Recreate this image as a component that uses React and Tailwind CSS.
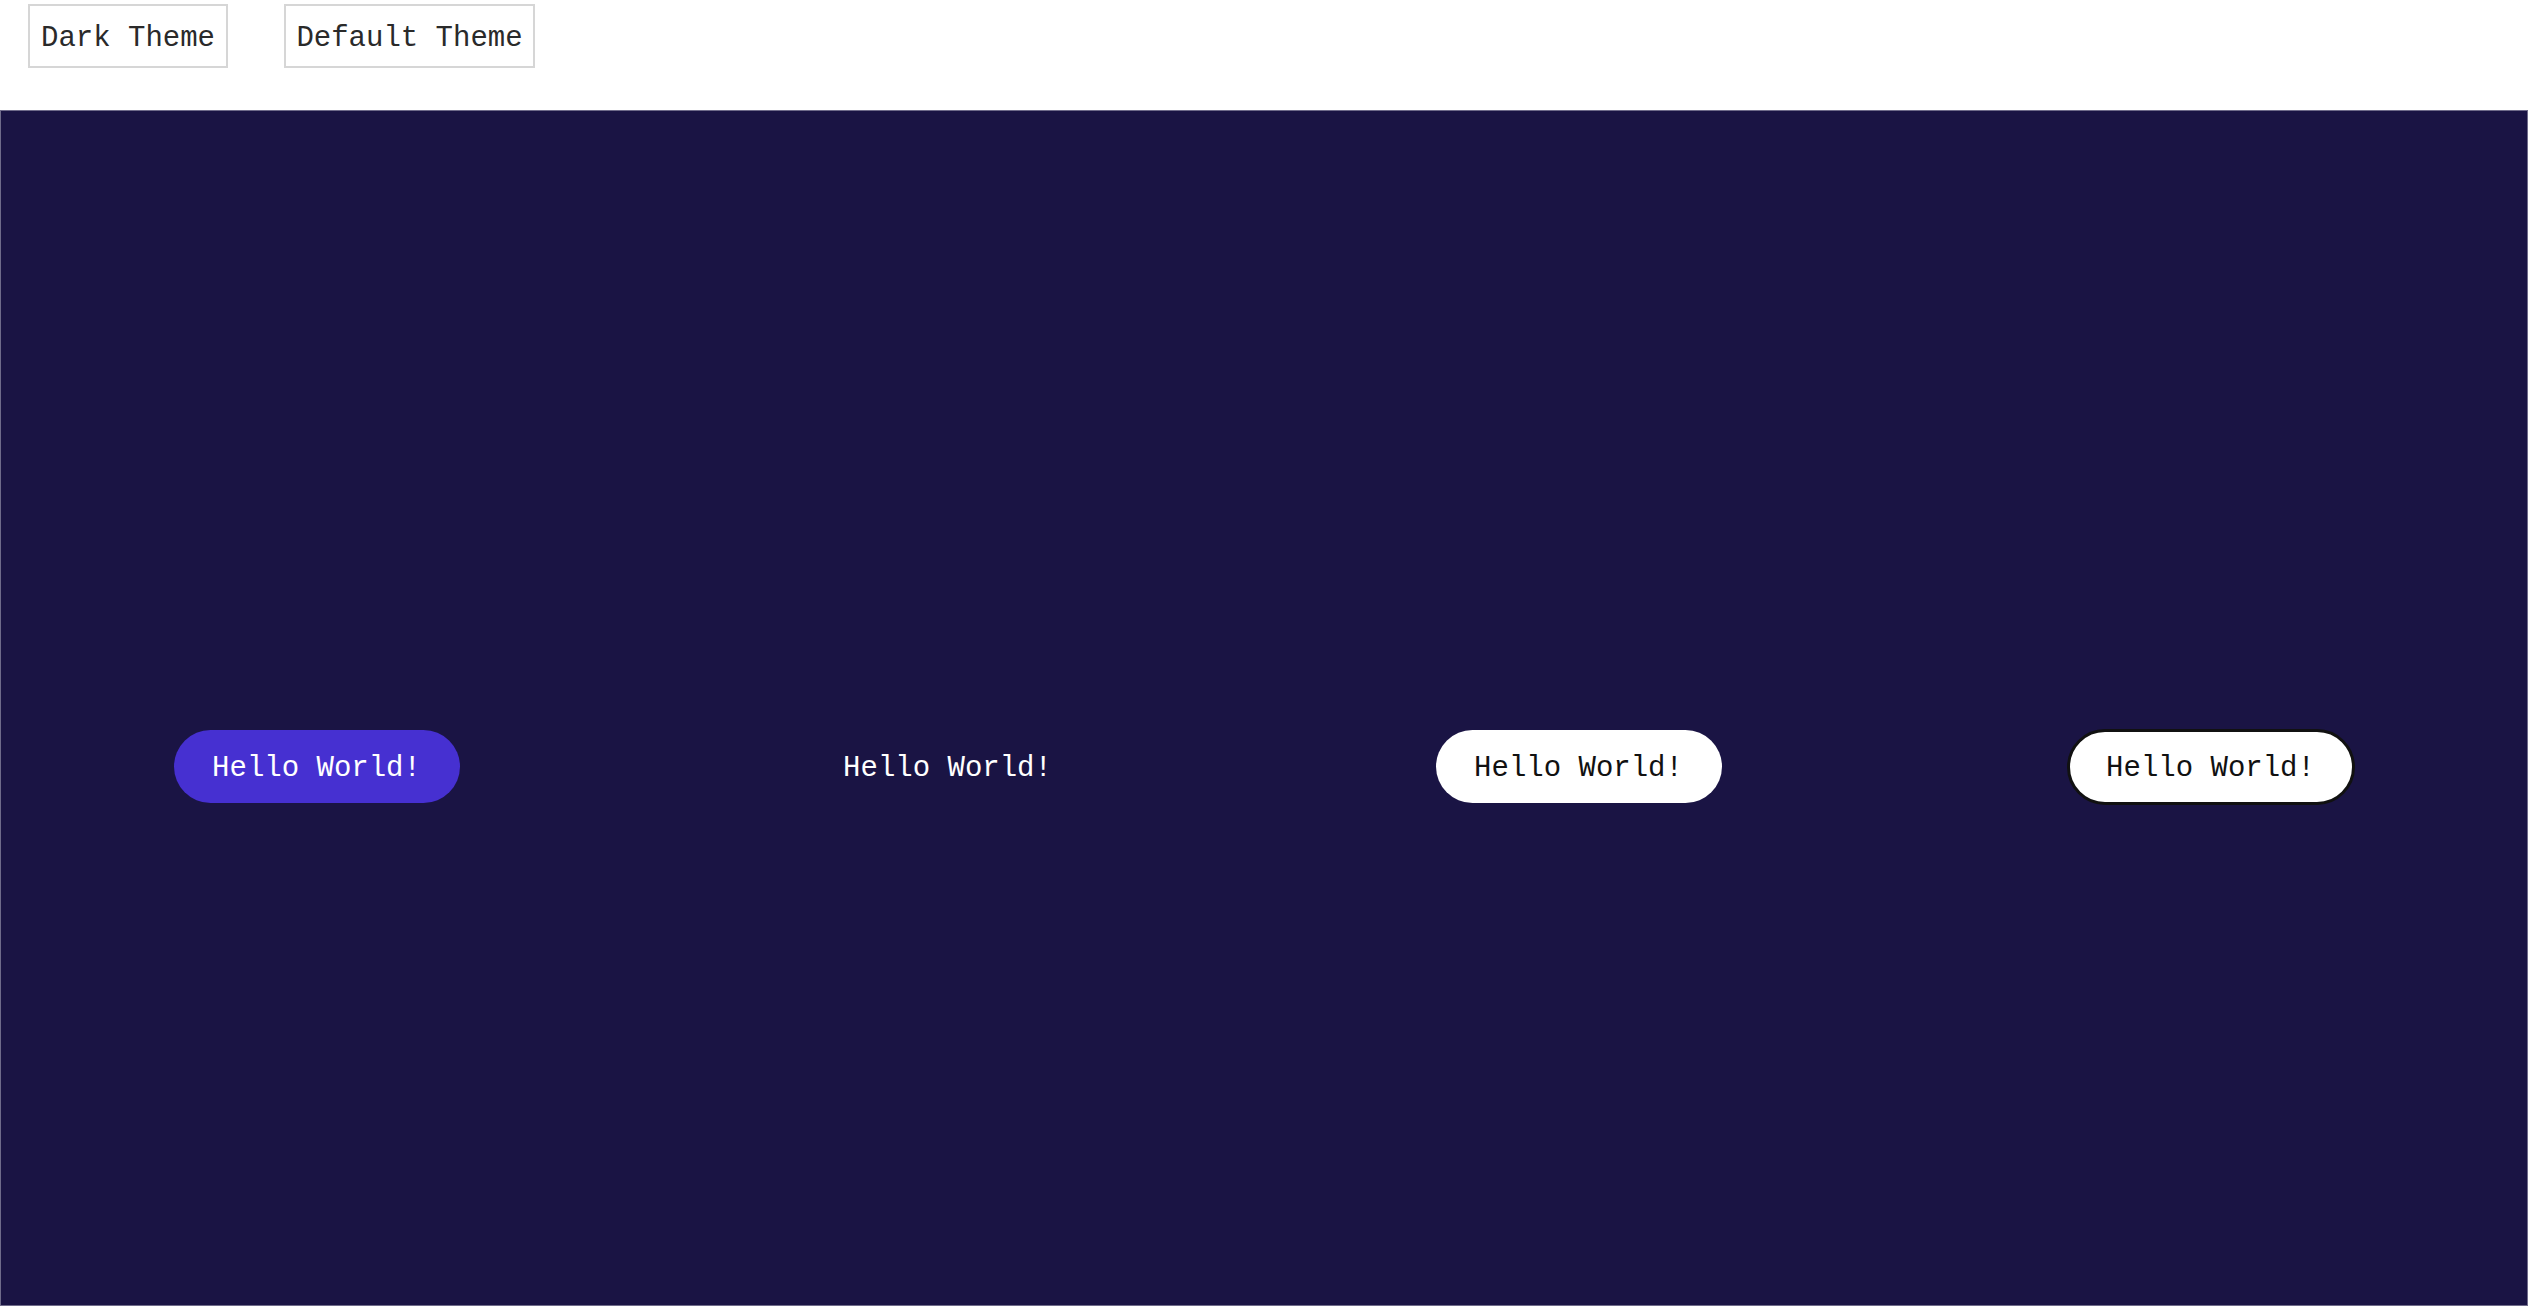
import React, { useState } from "react";

const mono = { fontFamily: '"Liberation Mono", "Courier New", monospace' };

const App = () => {
  const [theme, setTheme] = useState("dark");

  return (
    <div className="w-full bg-white" style={mono}>
      <div className="h-[110px] flex items-start gap-[56px] pl-[28px] pt-[4px]">
        <button
          onClick={() => setTheme("dark")}
          className="h-[64px] w-[200px] pt-[5px] border-2 border-[#d6d6d6] bg-white text-[29px] text-[#2a2a2a] flex items-center justify-center"
        >
          Dark Theme
        </button>
        <button
          onClick={() => setTheme("default")}
          className="h-[64px] w-[251px] pt-[5px] border-2 border-[#d6d6d6] bg-white text-[29px] text-[#2a2a2a] flex items-center justify-center"
        >
          Default Theme
        </button>
      </div>

      <div
        className={
          theme === "dark"
            ? "h-[1196px] pt-[117px] border border-[#6f6b8a] bg-[#1a1444] flex items-center justify-around"
            : "h-[1196px] pt-[117px] border border-[#cccccc] bg-white flex items-center justify-around"
        }
      >
        {/* primary */}
        <button className="w-[286px] h-[73px] pt-[5px] rounded-full bg-[#4630d1] text-white text-[29px] flex items-center justify-center">
          Hello World!
        </button>
        {/* text */}
        <button className="w-[286px] h-[73px] pt-[5px] rounded-full bg-transparent text-white text-[29px] flex items-center justify-center">
          Hello World!
        </button>
        {/* light */}
        <button className="w-[286px] h-[73px] pt-[5px] rounded-full bg-white text-[#111] text-[29px] flex items-center justify-center">
          Hello World!
        </button>
        {/* outline */}
        <button className="w-[288px] h-[76px] pt-[5px] rounded-full bg-white border-[3px] border-[#111] text-[#111] text-[29px] flex items-center justify-center">
          Hello World!
        </button>
      </div>
    </div>
  );
};

export default App;
